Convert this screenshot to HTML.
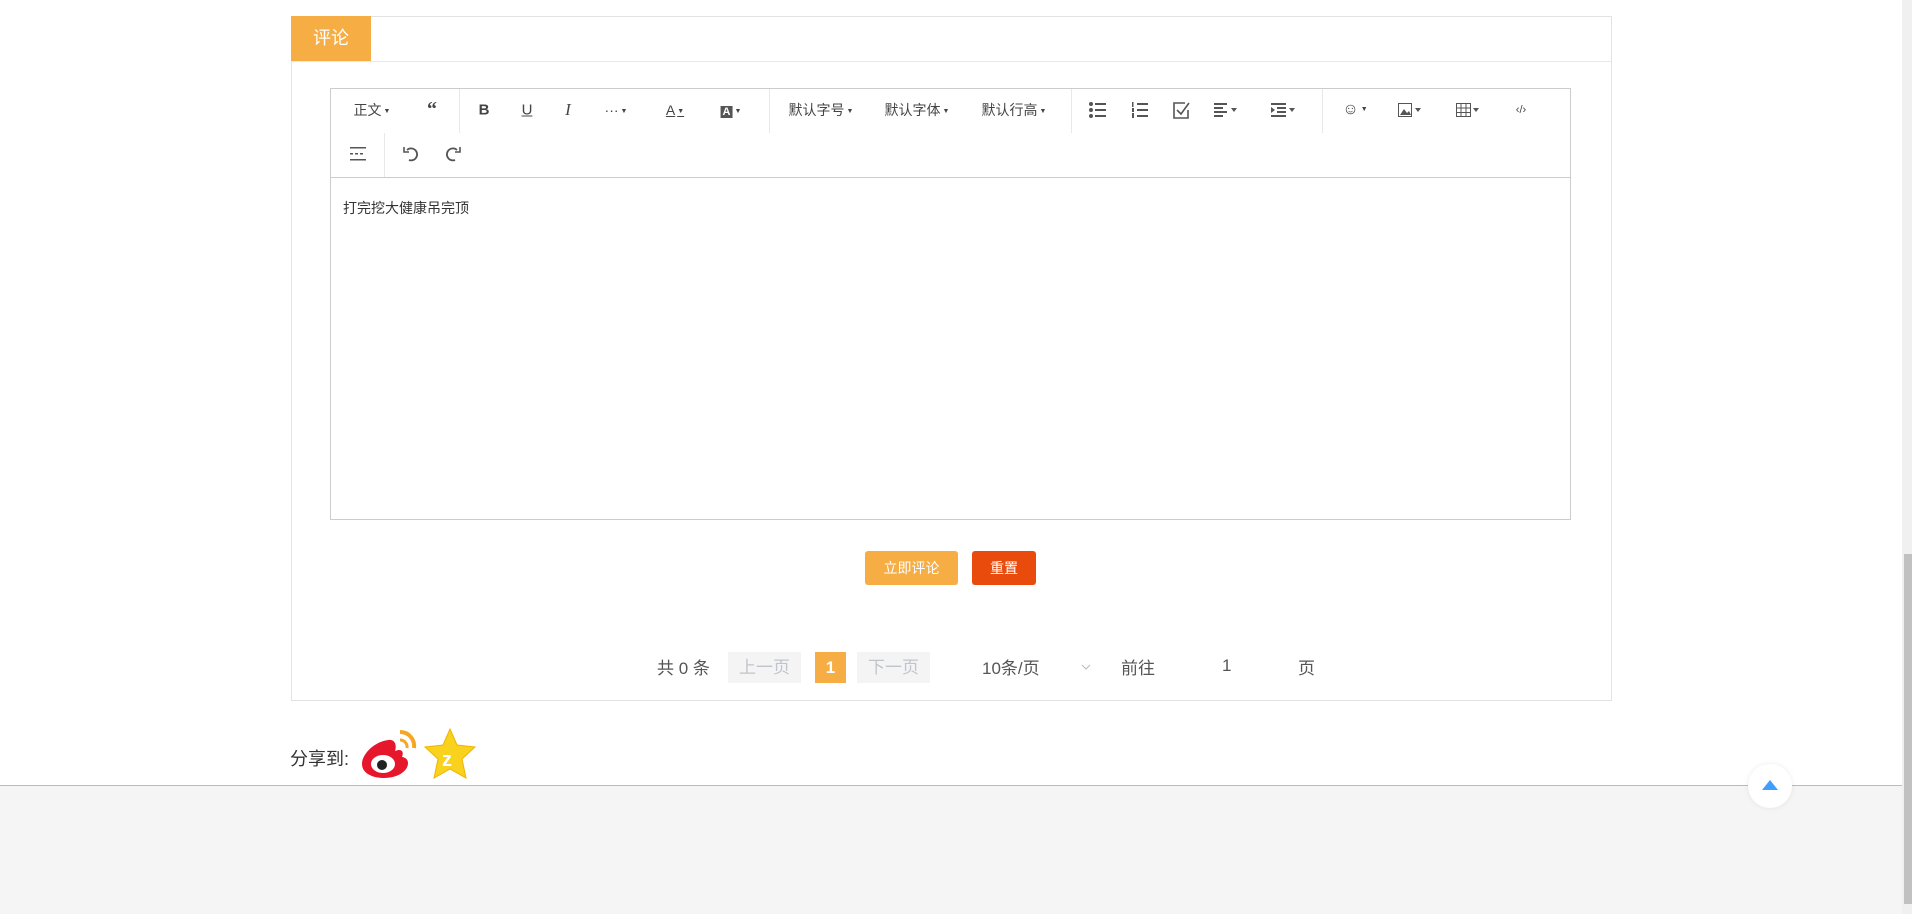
<!DOCTYPE html>
<html><head><meta charset="utf-8"><style>
*{margin:0;padding:0;box-sizing:border-box}
body{width:1912px;height:914px;overflow:hidden;background:#fff;position:relative;font-family:"Liberation Sans","Noto Sans CJK SC",sans-serif;color:#333}
.a{position:absolute}
.t{position:absolute;top:110px;transform:translate(-50%,-50%);font-size:14px;color:#444;white-space:nowrap}
.c{font-size:7px;vertical-align:middle;margin-left:2px}
.sep{position:absolute;width:1px;background:#e8e8e8}
</style></head><body>
<div class="a" style="left:291px;top:16px;width:1321px;height:685px;border:1px solid #e3e3e3"></div>
<div class="a" style="left:291px;top:61px;width:1321px;height:1px;background:#e8e8e8"></div>
<div class="a" style="left:291px;top:16px;width:80px;height:45px;background:#f5ad44;color:#fff;font-size:18px;line-height:45px;text-align:center">评论</div>

<div class="a" style="left:330px;top:88px;width:1241px;height:432px;border:1px solid #ccc"></div>
<div class="a" style="left:330px;top:177px;width:1241px;height:1px;background:#ccc"></div>
<div class="sep" style="left:459px;top:89px;height:44px"></div>
<div class="sep" style="left:769px;top:89px;height:44px"></div>
<div class="sep" style="left:1071px;top:89px;height:44px"></div>
<div class="sep" style="left:1322px;top:89px;height:44px"></div>
<div class="sep" style="left:384px;top:133px;height:44px"></div>

<div class="t" style="left:372px">正文<span class="c">▼</span></div>
<div class="t" style="left:432px;font-size:20px;font-weight:bold;font-family:'Liberation Serif',serif">“</div>
<div class="t" style="left:484px;font-weight:bold;font-size:15px">B</div>
<div class="t" style="left:527px;text-decoration:underline;font-size:15px">U</div>
<div class="t" style="left:568px;font-style:italic;font-family:'Liberation Serif',serif;font-size:17px">I</div>
<div class="t" style="left:616px">···<span class="c">▼</span></div>
<div class="t" style="left:675px;text-decoration:underline">A<span class="c">▼</span></div>
<div class="t" style="left:731px"><span style="background:#555;color:#fff;font-size:11px;padding:0 2px;font-weight:bold">A</span><span class="c">▼</span></div>
<div class="t" style="left:821px">默认字号<span class="c">▼</span></div>
<div class="t" style="left:917px">默认字体<span class="c">▼</span></div>
<div class="t" style="left:1014px">默认行高<span class="c">▼</span></div>
<svg class="a" style="left:1089px;top:102px" width="18" height="16" fill="#555"><circle cx="2" cy="2" r="2"/><circle cx="2" cy="8" r="2"/><circle cx="2" cy="14" r="2"/><rect x="6" y="1" width="11" height="2"/><rect x="6" y="7" width="11" height="2"/><rect x="6" y="13" width="11" height="2"/></svg>
<svg class="a" style="left:1131px;top:102px" width="18" height="16" fill="#555"><rect x="1" y="0" width="1.5" height="5"/><rect x="1" y="6" width="2" height="4"/><rect x="1" y="11" width="2" height="5"/><rect x="6" y="1" width="11" height="2"/><rect x="6" y="7" width="11" height="2"/><rect x="6" y="13" width="11" height="2"/></svg>
<svg class="a" style="left:1173px;top:101px" width="17" height="18" fill="none" stroke="#555" stroke-width="1.6"><path d="M12 2H1v15h14V9"/><path d="M4 9l4 4 8-11"/></svg>
<svg class="a" style="left:1214px;top:103px" width="24" height="14" fill="#555"><rect y="0" width="13" height="2"/><rect y="4" width="9" height="2"/><rect y="8" width="13" height="2"/><rect y="12" width="9" height="2"/><path d="M17 5h6l-3 4z"/></svg>
<svg class="a" style="left:1271px;top:103px" width="24" height="14" fill="#555"><rect y="0" width="15" height="2"/><path d="M0 4l4 3-4 3z"/><rect x="6" y="4" width="9" height="2"/><rect x="6" y="8" width="9" height="2"/><rect y="12" width="15" height="2"/><path d="M18 5h6l-3 4z"/></svg>
<div class="t" style="left:1355px;font-size:16px">☺<span class="c">▼</span></div>
<svg class="a" style="left:1398px;top:103px" width="24" height="14"><rect x="0.5" y="0.5" width="13" height="13" fill="none" stroke="#555"/><path d="M2 12l4-6 3 4 2-2 2 4z" fill="#555"/><path d="M17 5h6l-3 4z" fill="#555"/></svg>
<svg class="a" style="left:1456px;top:103px" width="24" height="14"><path d="M.5.5h14v13H.5zM.5 5h14M.5 9.5h14M5 .5v13M10 .5v13" fill="none" stroke="#555"/><path d="M17 5h6l-3 4z" fill="#555"/></svg>
<div class="t" style="left:1521px;font-size:11px">‹/›</div>
<svg class="a" style="left:350px;top:147px" width="16" height="14" fill="#555"><rect y="0" width="16" height="1.5"/><rect y="6" width="3" height="1.5"/><rect x="5" y="6" width="3" height="1.5"/><rect x="10" y="6" width="3" height="1.5"/><rect y="12" width="16" height="1.5"/></svg>
<svg class="a" style="left:403px;top:146px" width="16" height="16" fill="none" stroke="#555" stroke-width="1.8"><path d="M4 4a6 6 0 1 1 2 10"/><path d="M1 1v5h5" stroke-width="1.6"/></svg>
<svg class="a" style="left:445px;top:146px" width="16" height="16" fill="none" stroke="#555" stroke-width="1.8"><path d="M12 4a6 6 0 1 0-2 10"/><path d="M15 1v5h-5" stroke-width="1.6"/></svg>

<div class="a" style="left:343px;top:198px;font-size:14px;color:#333">打完挖大健康吊完顶</div>

<div class="a" style="left:865px;top:551px;width:93px;height:34px;background:#f5ad44;border-radius:3px;color:#fff;font-size:14px;line-height:34px;text-align:center">立即评论</div>
<div class="a" style="left:972px;top:551px;width:64px;height:34px;background:#e94b0c;border-radius:3px;color:#fff;font-size:14px;line-height:34px;text-align:center">重置</div>

<div class="a" style="left:657px;top:654px;font-size:17px;color:#555">共 0 条</div>
<div class="a" style="left:728px;top:652px;width:73px;height:31px;background:#f4f4f5;color:#c0c4cc;font-size:17px;line-height:31px;text-align:center">上一页</div>
<div class="a" style="left:815px;top:652px;width:31px;height:31px;background:#f5ad44;color:#fff;font-size:17px;font-weight:bold;line-height:31px;text-align:center">1</div>
<div class="a" style="left:857px;top:652px;width:73px;height:31px;background:#f4f4f5;color:#c0c4cc;font-size:17px;line-height:31px;text-align:center">下一页</div>
<div class="a" style="left:982px;top:654px;font-size:17px;color:#555">10条/页</div>
<svg class="a" style="left:1081px;top:664px" width="10" height="7"><path d="M1 1l4 4 4-4" fill="none" stroke="#bbb"/></svg>
<div class="a" style="left:1121px;top:654px;font-size:17px;color:#555">前往</div>
<div class="a" style="left:1222px;top:656px;font-size:17px;color:#555">1</div>
<div class="a" style="left:1298px;top:654px;font-size:17px;color:#555">页</div>

<div class="a" style="left:290px;top:745px;font-size:18px;color:#333">分享到:</div>
<svg class="a" style="left:360px;top:728px" width="60" height="52"><path d="M28 12c-14 2-26 14-26 24 0 9 10 14 22 14 14 0 24-7 24-15 0-5-5-6-6-6 2-5 0-9-7-6 2-6 0-12-7-11z" fill="#e6162d"/><ellipse cx="23" cy="36" rx="12" ry="9" fill="#fff"/><circle cx="22" cy="37" r="5" fill="#222"/><path d="M40 4a14 14 0 0 1 14 16" fill="none" stroke="#f5a623" stroke-width="4"/><path d="M40 12a7 7 0 0 1 7 8" fill="none" stroke="#f5a623" stroke-width="3"/></svg>
<svg class="a" style="left:423px;top:728px" width="54" height="52"><path d="M27 1l7 16 18 2-13 12 4 19-16-9-16 9 4-19L2 19l18-2z" fill="#f8d21c" stroke="#f0b400"/><text x="19" y="38" font-size="20" font-weight="bold" fill="#fff" font-family="Liberation Sans">z</text></svg>

<div class="a" style="left:0;top:786px;width:1902px;height:128px;background:#f5f5f5"></div>
<div class="a" style="left:0;top:785px;width:1902px;height:1px;background:#f0b453"></div>
<div class="a" style="left:1748px;top:764px;width:44px;height:44px;border-radius:50%;background:#fff;box-shadow:0 0 6px rgba(0,0,0,.08)"></div>
<svg class="a" style="left:1762px;top:780px" width="16" height="10"><path d="M8 0l8 10H0z" fill="#409eff"/></svg>

<div class="a" style="left:1902px;top:0;width:10px;height:914px;background:#f0f0f0"></div>
<div class="a" style="left:1904px;top:554px;width:8px;height:350px;background:#c1c1c1"></div>
</body></html>
